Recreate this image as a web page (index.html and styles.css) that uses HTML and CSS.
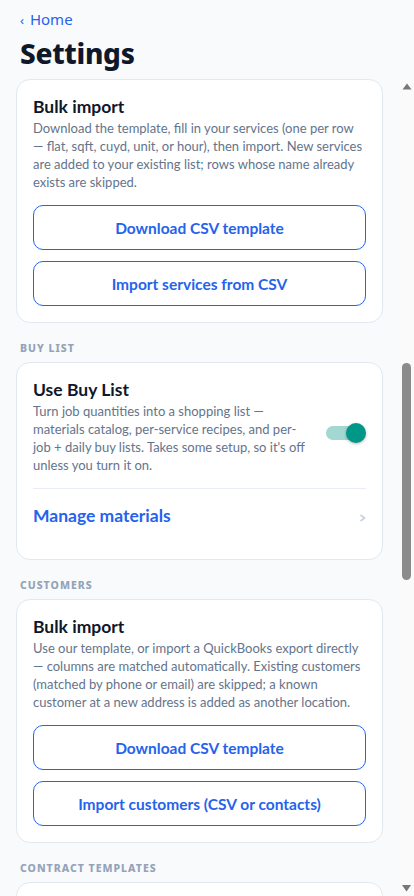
FILE: index.html
```html
<!DOCTYPE html>
<html lang="en">
<head>
    <meta charset="UTF-8">
    <meta name="viewport" content="width=device-width, initial-scale=1.0">
    <title>Settings</title>
    <link rel="stylesheet" href="styles.css">
</head>
<body>

    <header class="top">
        <a class="back" href="#home"><span class="back-arrow">‹</span> Home</a>
        <h1>Settings</h1>
    </header>

    <div class="body-row">
        <main class="scroll">

            <section class="group">
                <div class="card">
                    <h3>Bulk import</h3>
                    <p>Download the template, fill in your services (one per row — flat, sqft, cuyd, unit, or hour), then import. New services are added to your existing list; rows whose name already exists are skipped.</p>
                    <div class="btns">
                        <button class="btn-outline">Download CSV template</button>
                        <button class="btn-outline">Import services from CSV</button>
                    </div>
                </div>
            </section>

            <section class="group">
                <h2 class="group-label">Buy list</h2>
                <div class="card">
                    <div class="toggle-row">
                        <div class="toggle-text">
                            <h3>Use Buy List</h3>
                            <p>Turn job quantities into a shopping list — materials catalog, per-service recipes, and per-job + daily buy lists. Takes some setup, so it's off unless you turn it on.</p>
                        </div>
                        <span class="switch on"><span class="knob"></span></span>
                    </div>
                    <a class="link-row" href="#materials">
                        <span>Manage materials</span>
                        <svg class="chev" width="7" height="8" viewBox="0 0 7 8"><path d="M1.5 1L5.5 4L1.5 7" fill="none" stroke="#cbd5e1" stroke-width="2"/></svg>
                    </a>
                </div>
            </section>

            <section class="group">
                <h2 class="group-label">Customers</h2>
                <div class="card">
                    <h3>Bulk import</h3>
                    <p>Use our template, or import a QuickBooks export directly — columns are matched automatically. Existing customers (matched by phone or email) are skipped; a known customer at a new address is added as another location.</p>
                    <div class="btns">
                        <button class="btn-outline">Download CSV template</button>
                        <button class="btn-outline">Import customers (CSV or contacts)</button>
                    </div>
                </div>
            </section>

            <section class="group">
                <h2 class="group-label">Contract templates</h2>
                <div class="card">
                    <a class="link-row first" href="#templates">
                        <span>Manage templates</span>
                        <svg class="chev" width="7" height="8" viewBox="0 0 7 8"><path d="M1.5 1L5.5 4L1.5 7" fill="none" stroke="#cbd5e1" stroke-width="2"/></svg>
                    </a>
                </div>
            </section>

        </main>

        <!-- scrollbar rail -->
        <div class="rail">
            <svg width="15" height="15" viewBox="0 0 15 15"><path d="M3.5 11.5h9L8 5.5z" fill="#777"/></svg>
            <div class="track"><div class="thumb"></div></div>
            <svg width="15" height="15" viewBox="0 0 15 15"><path d="M3 4h9L7.5 10.5z" fill="#777"/></svg>
        </div>
    </div>

</body>
</html>
```

FILE: styles.css
```css
body {
    font-family: Lato, Arial, sans-serif;
    background-color: #f8fafc;
    color: #0f172a;
    margin: 0;
    padding: 0;
    height: 100vh;
    display: flex;
    flex-direction: column;
    overflow: hidden;
}
.top {
    height: 78px;
    box-sizing: border-box;
    padding: 8px 20px 0;
    font-family: "Noto Sans", Arial, sans-serif;
}
.back {
    display: block;
    color: #2563eb;
    text-decoration: none;
    font-size: 15px;
    line-height: 22px;
}
.back-arrow {
    font-size: 13px;
    margin-right: 2px;
}
.top h1 {
    margin: 2px 0 0;
    font-size: 28px;
    font-weight: 800;
    line-height: 40px;
    letter-spacing: -0.3px;
}
.body-row {
    flex: 1;
    min-height: 0;
    display: flex;
}
.scroll {
    flex: 1;
    overflow-y: auto;
    scrollbar-width: none;
    padding: 1px 16px 24px;
}
.rail {
    width: 15px;
    display: flex;
    flex-direction: column;
    background-color: #fafafa;
}
.rail svg {
    display: block;
    flex-shrink: 0;
}
.track {
    flex: 1;
}
.thumb {
    width: 9px;
    height: 217px;
    margin: 270px 0 0 3px;
    border-radius: 5px;
    background-color: #8b8b8b;
}
.group + .group {
    margin-top: 18px;
}
.group-label {
    margin: 0 4px 7px;
    font-family: "Noto Sans", Arial, sans-serif;
    font-size: 10.5px;
    font-weight: 800;
    letter-spacing: 1px;
    text-transform: uppercase;
    color: #94a3b8;
    line-height: 14px;
}
.card {
    background-color: #fff;
    border: 1px solid #e2e8f0;
    border-radius: 14px;
    padding: 15px 16px 16px;
}
.card h3 {
    margin: 0;
    font-size: 17.5px;
    font-weight: 700;
    line-height: 24px;
}
.card p {
    margin: 0;
    font-size: 13px;
    line-height: 18px;
    color: #64748b;
}
.btns {
    display: flex;
    flex-direction: column;
    gap: 11px;
    margin-top: 14px;
}
.btn-outline {
    height: 45px;
    background-color: #fff;
    border: 1px solid #2563eb;
    border-radius: 10px;
    color: #2563eb;
    font-family: Lato, Arial, sans-serif;
    font-size: 15.5px;
    font-weight: 700;
    cursor: pointer;
}
.toggle-row {
    display: flex;
    align-items: center;
    gap: 14px;
}
.toggle-text {
    flex: 1;
}
.switch {
    position: relative;
    width: 34px;
    height: 14px;
    border-radius: 7px;
    background-color: #bdbdbd;
    margin: 14px 6px 0 0;
    flex-shrink: 0;
}
.switch .knob {
    position: absolute;
    top: -3px;
    left: -3px;
    width: 20px;
    height: 20px;
    border-radius: 50%;
    background-color: #f5f5f5;
    box-shadow: 0 1px 3px rgba(0, 0, 0, 0.3);
}
.switch.on {
    background-color: #a3d7d1;
}
.switch.on .knob {
    left: auto;
    right: -6px;
    background-color: #009688;
}
.link-row {
    display: flex;
    justify-content: space-between;
    align-items: center;
    margin-top: 14px;
    padding: 15px 0 15px;
    border-top: 1px solid #e9eef4;
    color: #2563eb;
    text-decoration: none;
    font-size: 17.5px;
    font-weight: 700;
    line-height: 24px;
}
.link-row.first {
    margin-top: 0;
    border-top: none;
}
.chev {
    margin-top: 3px;
}
```
